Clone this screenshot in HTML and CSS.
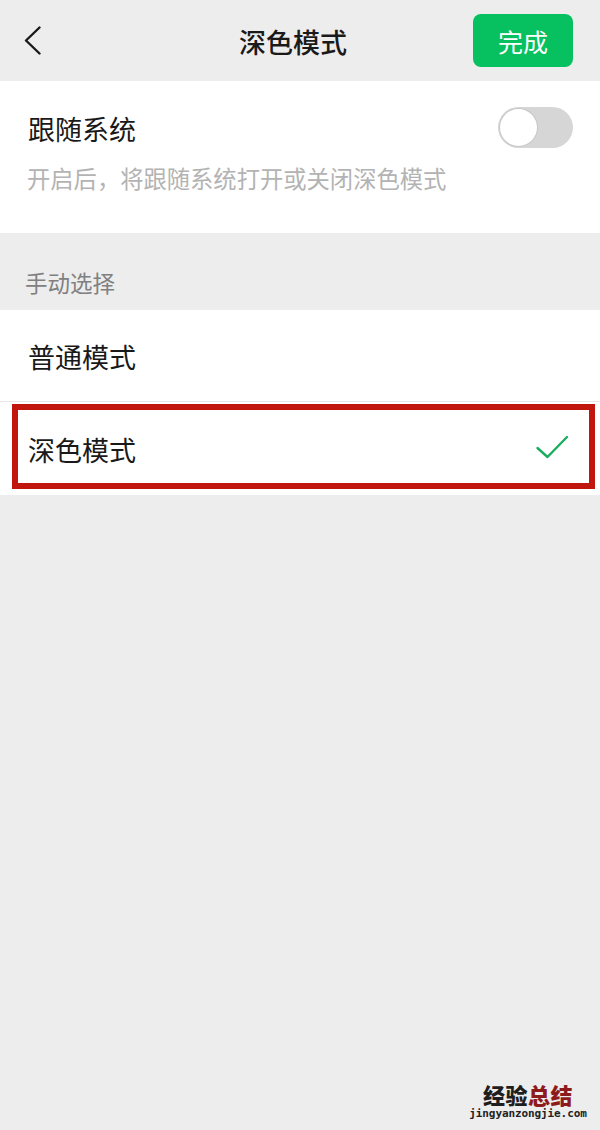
FILE: index.html
```html
<!DOCTYPE html>
<html lang="zh-CN">
<head>
<meta charset="utf-8">
<title>深色模式</title>
<link rel="stylesheet" href="styles.css">
</head>
<body>
<div class="page">
  <header class="topbar">
    <div class="back">
      <svg width="18" height="30" viewBox="0 0 18 30"><path d="M15.5 1.5 L2 14.5 L15.5 27.5" fill="none" stroke="#1a1a1a" stroke-width="2.4" stroke-linecap="round" stroke-linejoin="round"/></svg>
    </div>
    <h1 class="title">深色模式</h1>
    <div class="actions"><button class="done">完成</button></div>
  </header>

  <section class="card follow">
    <div class="follow-row">
      <span class="item-text follow-text">跟随系统</span>
      <span class="switch"><span class="knob"></span></span>
    </div>
    <p class="hint">开启后，将跟随系统打开或关闭深色模式</p>
  </section>

  <div class="group-label">手动选择</div>

  <section class="card list">
    <div class="row">
      <span class="item-text">普通模式</span>
    </div>
    <div class="row selected">
      <span class="item-text">深色模式</span>
      <svg class="check" width="34" height="26" viewBox="0 0 34 26"><path d="M2.5 13 L12.5 22 L32 2" fill="none" stroke="#1aad60" stroke-width="2.4" stroke-linecap="round" stroke-linejoin="round"/></svg>
      <span class="highlight"></span>
    </div>
  </section>

  <div class="watermark">
    <div class="wm-cn"><span class="wm-dark">经验</span><span class="wm-red">总结</span></div>
    <div class="wm-en">jingyanzongjie.com</div>
  </div>
</div>
</body>
</html>
```

FILE: styles.css
```css
html, body {
  margin: 0;
  padding: 0;
}
body {
  background: #ededed;
  font-family: "Noto Sans CJK SC", "Noto Sans", sans-serif;
  color: #191919;
}
.page {
  position: relative;
  width: 600px;
  height: 1130px;
  overflow: hidden;
  background: #ededed;
}
.topbar {
  height: 81px;
  display: grid;
  grid-template-columns: 1fr auto 1fr;
  align-items: center;
  padding: 0 27px 0 24px;
  box-sizing: border-box;
  background: #ededed;
}
.back {
  display: flex;
  align-items: center;
}
.back svg {
  display: block;
}
.title {
  margin: 3px 11px 0 0;
  font-size: 27px;
  font-weight: 500;
  line-height: 36px;
  color: #1a1a1a;
}
.actions {
  display: flex;
  justify-content: flex-end;
}
.done {
  width: 100px;
  height: 53px;
  border: none;
  border-radius: 8px;
  background: #07c160;
  color: #ffffff;
  font-family: "Noto Sans CJK SC", sans-serif;
  font-size: 25px;
  line-height: 30px;
  padding: 0;
}
.card {
  background: #ffffff;
}
.follow {
  padding: 26px 27px 40px 27px;
}
.follow-row {
  height: 41px;
  display: flex;
  align-items: center;
  justify-content: space-between;
}
.item-text {
  font-size: 27px;
  line-height: 36px;
  color: #191919;
}
.follow-text {
  padding-left: 1px;
  padding-top: 3px;
}
.switch {
  position: relative;
  width: 75px;
  height: 41px;
  border-radius: 21px;
  background: #d6d6d6;
}
.knob {
  position: absolute;
  left: 2px;
  top: 2px;
  width: 37px;
  height: 37px;
  border-radius: 50%;
  background: #ffffff;
  box-shadow: 0 0 0 1px #c8c8c8;
}
.hint {
  margin: 15px 0 0 0;
  font-size: 23.3px;
  line-height: 30px;
  color: #b3b3b3;
}
.group-label {
  padding: 34px 25px 13px 25px;
  font-size: 22.5px;
  line-height: 30px;
  color: #808080;
}
.row {
  position: relative;
  height: 91px;
  display: flex;
  align-items: center;
  justify-content: space-between;
  padding: 0 31px 0 28px;
}
.row + .row {
  border-top: 1px solid #e6e6e6;
  height: 93px;
}
.row .item-text {
  padding-top: 2px;
}
.check {
  display: block;
  margin-top: -2px;
}
.highlight {
  position: absolute;
  left: 12px;
  right: 5px;
  top: 2px;
  bottom: 6px;
  border: 6px solid #c0160e;
  pointer-events: none;
}
.watermark {
  position: absolute;
  left: 469px;
  top: 1083px;
  width: 118px;
  display: flex;
  flex-direction: column;
  align-items: center;
  gap: 3px;
}
.wm-cn {
  font-size: 22px;
  line-height: 22px;
  font-weight: 900;
  letter-spacing: 0.5px;
}
.wm-dark {
  color: #1e1e1e;
}
.wm-red {
  color: #8e1b1b;
}
.wm-en {
  font-family: "DejaVu Sans Mono", "Liberation Mono", monospace;
  font-weight: bold;
  font-size: 11px;
  line-height: 12px;
  letter-spacing: -0.1px;
  color: #222222;
}
```
